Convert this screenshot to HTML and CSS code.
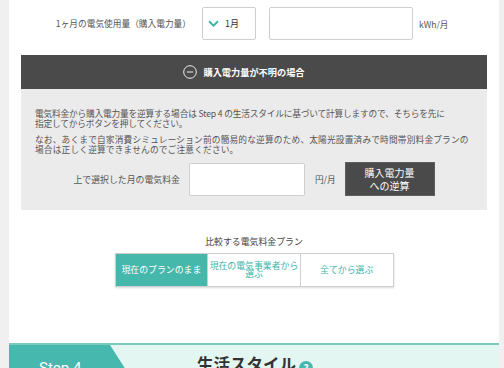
FILE: index.html
```html
<!DOCTYPE html>
<html lang="ja">
<head>
<meta charset="utf-8">
<link rel="stylesheet" href="styles.css">
</head>
<body>
<div class="page">
  <div class="panel">
    <div class="usage-row">
      <div class="usage-label">1ヶ月の電気使用量（購入電力量）</div>
      <div class="month-select">
        <svg class="chev" width="11" height="7" viewBox="0 0 11 7"><path d="M1 1.2 L5.5 5.6 L10 1.2" fill="none" stroke="#3db5a8" stroke-width="2"/></svg>
        <span>1月</span>
      </div>
      <div class="text-input usage-input"></div>
      <div class="unit">kWh/月</div>
    </div>

    <div class="unknown">
      <div class="unknown-head">
        <svg class="minus-icon" width="14" height="14" viewBox="0 0 14 14"><circle cx="7" cy="7" r="6.3" fill="none" stroke="#fff" stroke-width="0.9"/><path d="M3.8 7 H10.2" stroke="#fff" stroke-width="0.9"/></svg>
        <span class="head-text">購入電力量が不明の場合</span>
      </div>
      <div class="unknown-body">
        <p class="note note-a">電気料金から購入電力量を逆算する場合は Step 4 の生活スタイルに基づいて計算しますので、そちらを先に<br>指定してからボタンを押してください。</p>
        <p class="note note-b">なお、あくまで自家消費シミュレーション前の簡易的な逆算のため、太陽光設置済みで時間帯別料金プランの<br>場合は正しく逆算できませんのでご注意ください。</p>
        <div class="fee-row">
          <div class="fee-label">上で選択した月の電気料金</div>
          <div class="text-input fee-input"></div>
          <div class="unit fee-unit">円/月</div>
          <div class="calc-btn">購入電力量<br>への逆算</div>
        </div>
      </div>
    </div>

    <div class="compare">
      <div class="compare-title">比較する電気料金プラン</div>
      <div class="seg">
        <div class="seg-item active">現在のプランのまま</div>
        <div class="seg-item">現在の電気事業者から<br>選ぶ</div>
        <div class="seg-item">全てから選ぶ</div>
      </div>
    </div>

    <div class="step">
      <div class="step-tab">Step 4</div>
      <div class="step-title">生活スタイル</div>
      <div class="help">?</div>
    </div>
  </div>
</div>
</body>
</html>
```

FILE: styles.css
```css
html, body {
  margin: 0;
  padding: 0;
  height: 100%;
  overflow: hidden;
}
body {
  background: #f0f0f0;
  font-family: "Noto Sans CJK JP", "Noto Sans", sans-serif;
  color: #555;
}
.page {
  padding-left: 9px;
}
.panel {
  width: 490px;
  background: #fff;
  height: 420px;
}
.usage-row {
  display: flex;
  align-items: center;
  padding-top: 7px;
  height: 33px;
}
.usage-label {
  width: 182px;
  text-align: right;
  font-size: 8.7px;
  color: #555;
  white-space: nowrap;
}
.month-select {
  margin-left: 11px;
  width: 52px;
  height: 31px;
  border: 1px solid #cfcfcf;
  border-radius: 2px;
  display: flex;
  align-items: center;
  font-size: 9px;
  color: #333;
}
.chev {
  margin-left: 5px;
  margin-right: 6px;
}
.text-input {
  border: 1px solid #cfcfcf;
  border-radius: 2px;
  background: #fff;
  box-sizing: border-box;
}
.usage-input {
  margin-left: 13px;
  width: 144px;
  height: 33px;
}
.unit {
  margin-left: 6px;
  font-size: 8.6px;
  color: #555;
}
.unknown {
  margin: 15px 0 0 12px;
  width: 466px;
}
.unknown-head {
  height: 34px;
  background: #4a4a4a;
  display: flex;
  align-items: center;
  justify-content: center;
  padding-right: 20px;
  gap: 6px;
}
.head-text {
  color: #fff;
  font-weight: bold;
  font-size: 9.2px;
}
.unknown-body {
  background: #ebebeb;
  padding: 20px 14px 14px 14px;
}
.note {
  margin: 0 0 6px 0;
  font-size: 8.7px;
  line-height: 10px;
  color: #555;
  white-space: nowrap;
}
.note-a {
  letter-spacing: -0.18px;
}
.note-b {
  letter-spacing: 0.17px;
}
.fee-row {
  display: flex;
  align-items: center;
  margin-top: 7px;
  height: 34px;
}
.fee-label {
  width: 145px;
  text-align: right;
  font-size: 8.9px;
  color: #555;
}
.fee-input {
  margin-left: 9px;
  width: 116px;
  height: 33px;
}
.fee-unit {
  margin-left: 10px;
}
.calc-btn {
  margin-left: 9px;
  width: 90px;
  height: 34px;
  box-sizing: border-box;
  background: #4a4a4a;
  border: 1px solid #5e5e5e;
  color: #fff;
  font-size: 10px;
  line-height: 13px;
  text-align: center;
  display: flex;
  align-items: center;
  justify-content: center;
}
.compare {
  margin-top: 26px;
  display: flex;
  flex-direction: column;
  align-items: center;
}
.compare-title {
  font-size: 8.9px;
  line-height: 12px;
  color: #444;
}
.seg {
  margin-top: 5px;
  display: flex;
  width: 279px;
  height: 34px;
  box-sizing: border-box;
  border: 1px solid #cfcfcf;
  box-shadow: 0 1px 2px rgba(0,0,0,0.15);
  background: #fff;
}
.seg-item {
  flex: 1;
  display: flex;
  align-items: center;
  justify-content: center;
  text-align: center;
  font-size: 8.9px;
  line-height: 8.5px;
  color: #3db5a8;
  white-space: nowrap;
  border-left: 1px solid #cfcfcf;
}
.seg-item:first-child {
  border-left: none;
}
.seg-item.active {
  background: #45b8ab;
  color: #fff;
  line-height: 12px;
}
.step {
  margin-top: 56px;
  border-top: 2px solid #7ccabf;
  background: #e4f6f1;
  height: 50px;
  display: flex;
  align-items: flex-start;
}
.step-tab {
  width: 133px;
  height: 50px;
  background: #47b8ad;
  clip-path: polygon(0 0, 101px 0, 133px 50px, 0 50px);
  color: #fff;
  font-family: Roboto, "Noto Sans", sans-serif;
  font-size: 15px;
  padding-left: 30px;
  padding-top: 14px;
  box-sizing: border-box;
}
.step-title {
  margin-left: 55px;
  margin-top: 7px;
  font-size: 16.5px;
  font-weight: bold;
  color: #333;
  line-height: 24px;
}
.help {
  margin-left: 3px;
  margin-top: 16px;
  width: 14px;
  height: 14px;
  border-radius: 50%;
  background: #47b8ad;
  color: #fff;
  font-size: 10px;
  line-height: 14px;
  text-align: center;
  font-weight: bold;
}
```
